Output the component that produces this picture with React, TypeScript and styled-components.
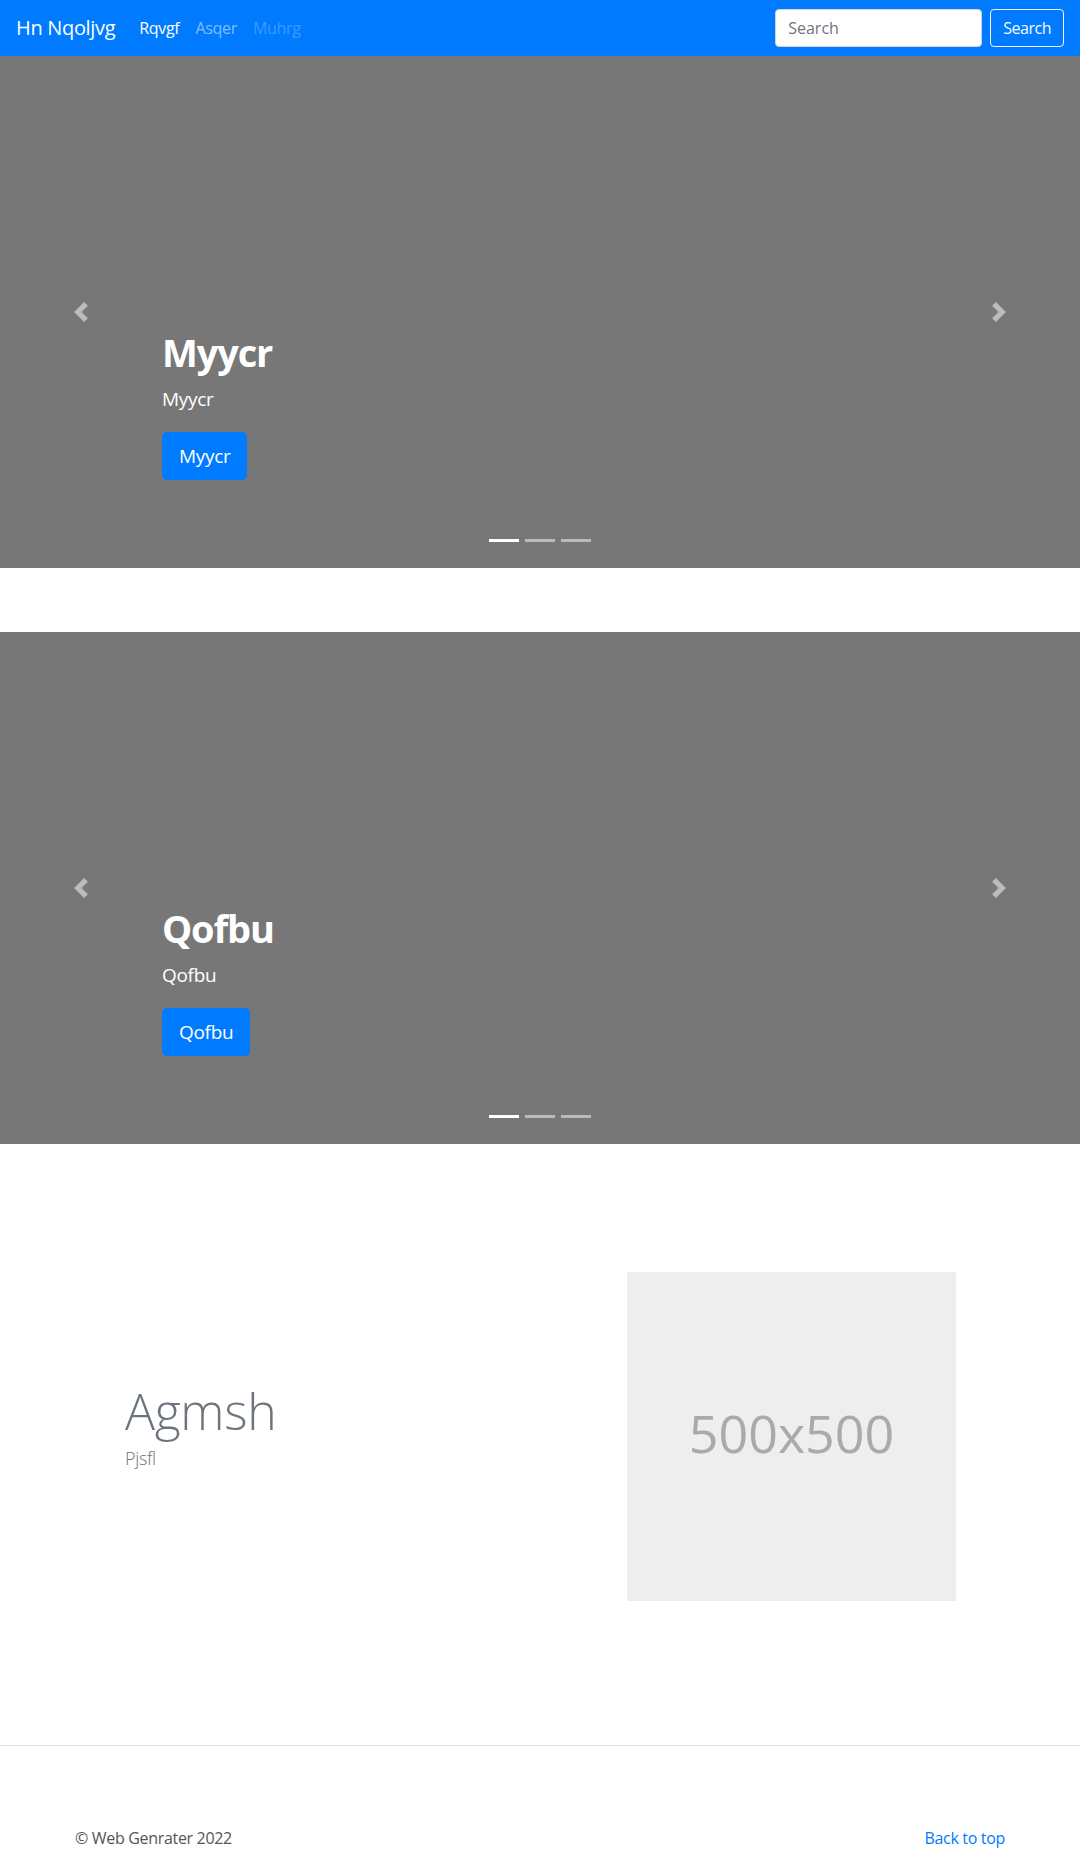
import React from "react";
import styled, { createGlobalStyle, css } from "styled-components";

const GlobalStyle = createGlobalStyle`
  *, *::before, *::after { box-sizing: border-box; }
  body {
    margin: 0;
    font-family: "Open Sans", "Noto Sans", sans-serif;
    font-size: 16px;
    line-height: 1.5;
    color: #212529;
    background: #fff;
    letter-spacing: -0.02em;
  }
`;

const Navbar = styled.nav`
  display: flex;
  align-items: center;
  height: 56px;
  padding: 0 16px;
  background: #007bff;
`;

const Brand = styled.a`
  font-size: 20px;
  line-height: 30px;
  color: #fff;
  text-decoration: none;
  margin-right: 16px;
`;

const NavList = styled.ul`
  display: flex;
  list-style: none;
  margin: 0;
  padding: 0;
`;

const NavLink = styled.a<{ $state: "active" | "normal" | "disabled" }>`
  display: block;
  padding: 8px;
  font-size: 16px;
  line-height: 24px;
  text-decoration: none;
  color: ${(p) =>
    p.$state === "active"
      ? "#fff"
      : p.$state === "disabled"
      ? "rgba(255,255,255,0.25)"
      : "rgba(255,255,255,0.5)"};
`;

const SearchForm = styled.form`
  display: flex;
  gap: 8px;
  margin-left: auto;
`;

const SearchInput = styled.input`
  width: 207px;
  height: 38px;
  padding: 6px 12px;
  font: inherit;
  font-size: 16px;
  color: #495057;
  background: #fff;
  border: 1px solid #ced4da;
  border-radius: 4px;
  outline: none;
  &::placeholder { color: #6c757d; }
`;

const OutlineButton = styled.button`
  height: 38px;
  padding: 6px 12px;
  font: inherit;
  font-size: 16px;
  line-height: 24px;
  letter-spacing: -0.03em;
  color: #f8f9fa;
  background: transparent;
  border: 1px solid #f8f9fa;
  border-radius: 4px;
`;

const Carousel = styled.section`
  position: relative;
  height: 512px;
  margin-bottom: 64px;
  background: #777;
  overflow: hidden;
`;

const Caption = styled.div`
  display: flex;
  flex-direction: column;
  align-items: flex-start;
  justify-content: flex-end;
  height: 100%;
  padding: 0 15% 88px;
  color: #fff;
`;

const CaptionTitle = styled.h1`
  margin: 0 0 8px;
  font-size: 38px;
  line-height: 48px;
  font-weight: 700;
  letter-spacing: -0.03em;
`;

const CaptionText = styled.p`
  margin: 0 0 18px;
  font-size: 19px;
  line-height: 30px;
`;

const PrimaryButton = styled.a`
  display: inline-flex;
  align-items: center;
  height: 48px;
  padding: 0 16px;
  font-size: 19px;
  color: #fff;
  background: #007bff;
  border: 1px solid #007bff;
  border-radius: 4.8px;
  text-decoration: none;
`;

const Control = styled.a<{ $side: "left" | "right" }>`
  position: absolute;
  top: 0;
  bottom: 0;
  ${(p) => (p.$side === "left" ? css`left: 0;` : css`right: 0;`)}
  width: 15%;
  display: flex;
  align-items: center;
  justify-content: center;
  opacity: 0.5;
`;

const Indicators = styled.ol`
  position: absolute;
  left: 0;
  right: 0;
  bottom: 26px;
  display: flex;
  justify-content: center;
  gap: 6px;
  margin: 0;
  padding: 0;
  list-style: none;
`;

const Indicator = styled.li<{ $active?: boolean }>`
  width: 30px;
  height: 3px;
  background: #fff;
  opacity: ${(p) => (p.$active ? 1 : 0.5)};
`;

const Featurette = styled.section`
  display: flex;
  align-items: center;
  width: 930px;
  margin: 0 auto;
  padding: 64px 0 144px;
`;

const FeatureText = styled.div`
  flex: 1;
  padding-left: 50px;
  padding-bottom: 24px;
`;

const FeatureHeading = styled.h2`
  margin: 0;
  font-size: 50px;
  line-height: 67px;
  font-weight: 300;
  color: #6c757d;
`;

const Lead = styled.p`
  margin: 0;
  font-size: 18px;
  line-height: 26px;
  font-weight: 300;
  color: #6c757d;
`;

const Placeholder = styled.div`
  width: 329px;
  height: 329px;
  margin-right: 49px;
  padding-bottom: 8px;
  display: flex;
  align-items: center;
  justify-content: center;
  background: #eee;
  color: #aaa;
  font-size: 52px;
  letter-spacing: 0;
`;

const Divider = styled.hr`
  margin: 0;
  border: 0;
  border-top: 1px solid rgba(0, 0, 0, 0.1);
`;

const Footer = styled.footer`
  display: flex;
  justify-content: space-between;
  width: 930px;
  margin: 0 auto;
  padding: 80px 0 16px;
  color: #555;
`;

const FooterLink = styled.a`
  color: #007bff;
  text-decoration: none;
`;

const Chevron = ({ dir }: { dir: "prev" | "next" }) => (
  <svg width="20" height="20" viewBox="0 0 8 8" fill="#fff">
    <path
      d={
        dir === "prev"
          ? "M5.25 0l-4 4 4 4 1.5-1.5L4.25 4l2.5-2.5L5.25 0z"
          : "M2.75 0l-1.5 1.5L3.75 4l-2.5 2.5L2.75 8l4-4-4-4z"
      }
    />
  </svg>
);

const Slide = ({ label }: { label: string }) => (
  <Carousel>
    <Caption>
      <CaptionTitle>{label}</CaptionTitle>
      <CaptionText>{label}</CaptionText>
      <PrimaryButton href="#">{label}</PrimaryButton>
    </Caption>
    <Control $side="left" href="#">
      <Chevron dir="prev" />
    </Control>
    <Control $side="right" href="#">
      <Chevron dir="next" />
    </Control>
    <Indicators>
      <Indicator $active />
      <Indicator />
      <Indicator />
    </Indicators>
  </Carousel>
);

export default function App() {
  return (
    <>
      <GlobalStyle />
      <Navbar>
        <Brand href="#">Hn Nqoljvg</Brand>
        <NavList>
          <li><NavLink $state="active" href="#">Rqvgf</NavLink></li>
          <li><NavLink $state="normal" href="#">Asqer</NavLink></li>
          <li><NavLink $state="disabled" href="#">Muhrg</NavLink></li>
        </NavList>
        <SearchForm onSubmit={(e) => e.preventDefault()}>
          <SearchInput placeholder="Search" />
          <OutlineButton type="submit">Search</OutlineButton>
        </SearchForm>
      </Navbar>
      <Slide label="Myycr" />
      <Slide label="Qofbu" />
      <Featurette>
        <FeatureText>
          <FeatureHeading>Agmsh</FeatureHeading>
          <Lead>Pjsfl</Lead>
        </FeatureText>
        <Placeholder>500x500</Placeholder>
      </Featurette>
      <Divider />
      <Footer>
        <span>© Web Genrater 2022</span>
        <FooterLink href="#">Back to top</FooterLink>
      </Footer>
    </>
  );
}
